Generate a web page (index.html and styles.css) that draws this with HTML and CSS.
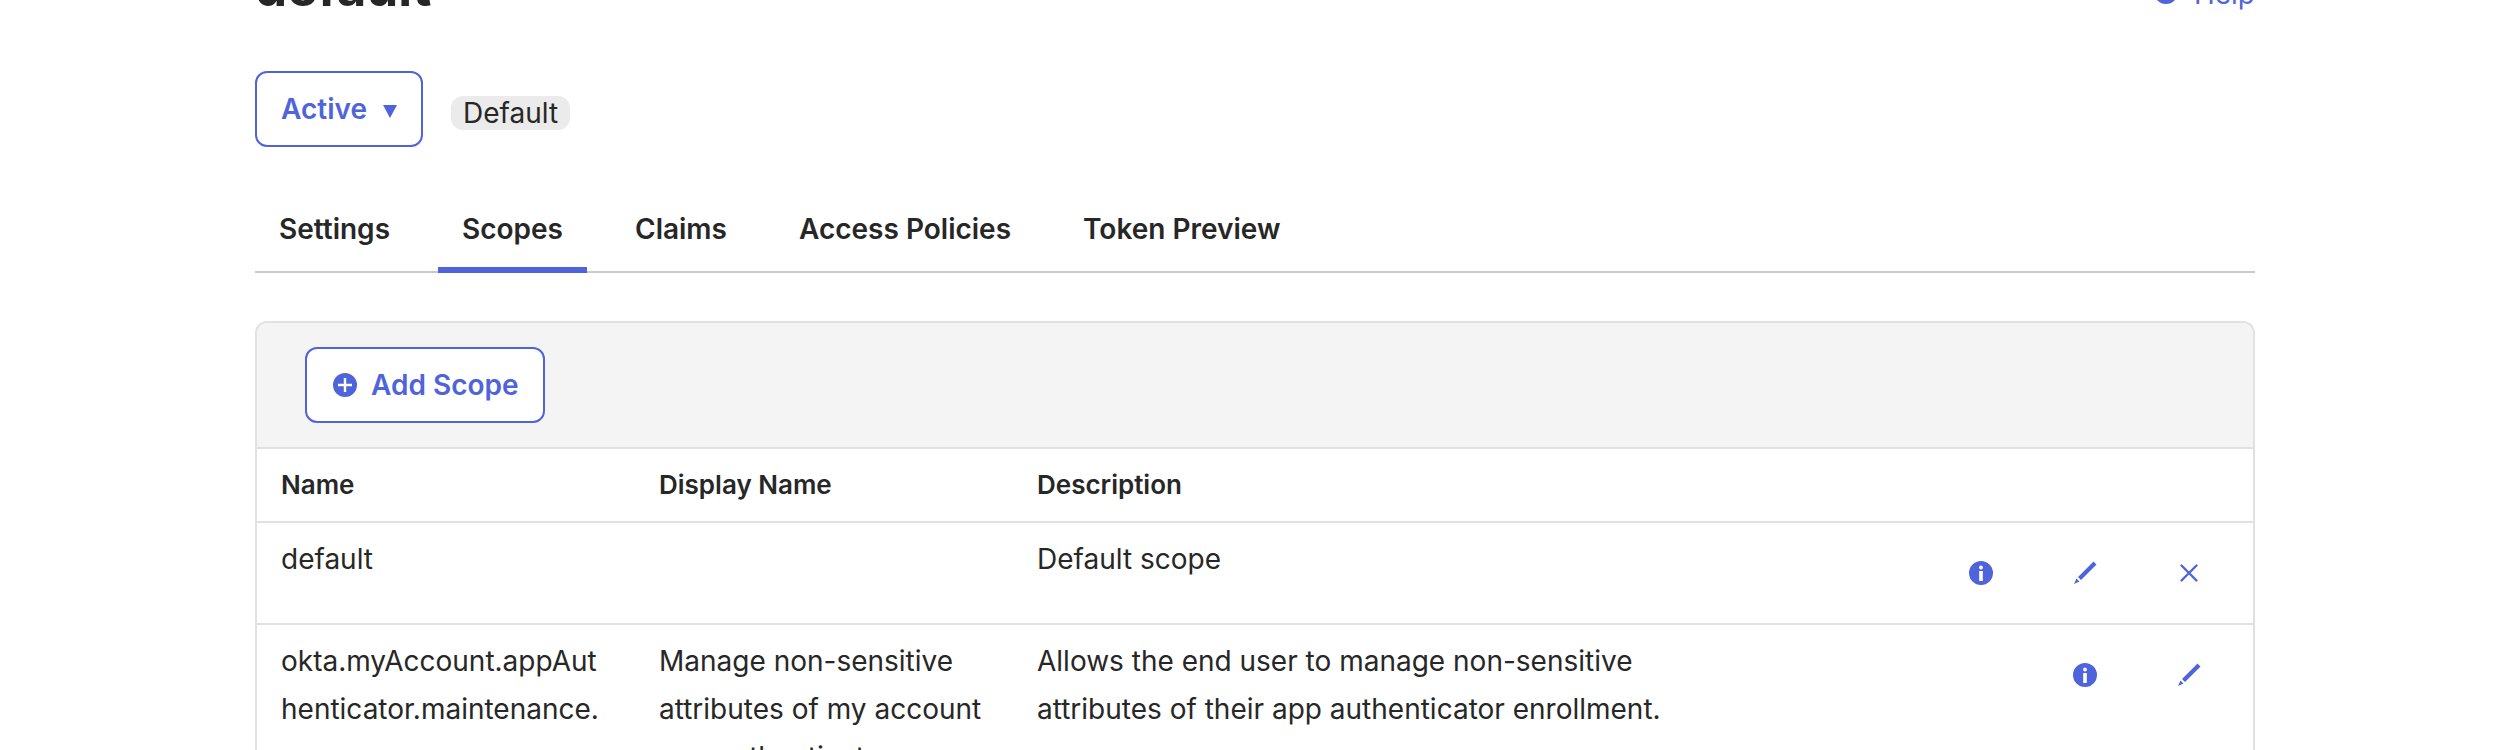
FILE: index.html
```html
<!DOCTYPE html>
<html lang="en">
<head>
    <meta charset="UTF-8">
    <meta name="viewport" content="width=device-width, initial-scale=1.0">
    <title>default - Authorization Server</title>
    <link rel="stylesheet" href="styles.css">
</head>
<body>

<!-- icons shared by the buttons below -->
<svg class="icon-defs" aria-hidden="true">
  <symbol id="icon-info" viewBox="0 0 24 24">
    <path fill-rule="evenodd" d="M12 0a12 12 0 1 1 0 24a12 12 0 0 1 0-24zM12 4.600a1.900 1.900 0 1 0 0 3.800a1.900 1.900 0 0 0 0-3.800zM10.200 10v10h3.600V10z"/>
  </symbol>
  <symbol id="icon-plus" viewBox="0 0 24 24">
    <path fill-rule="evenodd" d="M12 0a12 12 0 1 1 0 24a12 12 0 0 1 0-24zM10.800 5v5.800H5v2.400h5.800V19h2.400v-5.800H19v-2.400h-5.800V5z"/>
  </symbol>
  <symbol id="icon-pencil" viewBox="0 0 24 24">
    <path d="M20.500 0.500L23.500 3.500L8 19L5 16zM3.500 17.500L6.500 20.500L1 23z"/>
  </symbol>
  <symbol id="icon-close" viewBox="0 0 24 24">
    <path d="M4.500 4.500L19.500 19.500M19.500 4.500L4.500 19.500" fill="none" stroke="currentColor" stroke-width="2.400" stroke-linecap="round"/>
  </symbol>
</svg>

<main class="page">
  <header class="page-header">
    <h1>default</h1>
    <a class="help-link" href="#help">
      <svg class="icon"><use href="#icon-info"/></svg>
      Help
    </a>
  </header>

  <div class="status-bar">
    <button class="button status-button" type="button">Active <span class="caret"></span></button>
    <span class="label">Default</span>
  </div>

  <nav class="tabs">
    <a class="tab" href="#settings">Settings</a>
    <a class="tab active" href="#scopes">Scopes</a>
    <a class="tab" href="#claims">Claims</a>
    <a class="tab" href="#policies">Access Policies</a>
    <a class="tab" href="#preview">Token Preview</a>
  </nav>

  <section class="panel">
    <div class="panel-header">
      <button class="button add-button" type="button">
        <svg class="icon"><use href="#icon-plus"/></svg>
        Add Scope
      </button>
    </div>

    <table class="scopes">
      <thead>
        <tr>
          <th class="col-name">Name</th>
          <th class="col-display">Display Name</th>
          <th class="col-description">Description</th>
          <th class="col-actions"></th>
        </tr>
      </thead>
      <tbody>
        <tr>
          <td>default</td>
          <td></td>
          <td>Default scope</td>
          <td>
            <div class="actions">
              <button type="button" aria-label="Info"><svg class="icon"><use href="#icon-info"/></svg></button>
              <button type="button" aria-label="Edit"><svg class="icon"><use href="#icon-pencil"/></svg></button>
              <button type="button" aria-label="Delete"><svg class="icon"><use href="#icon-close"/></svg></button>
            </div>
          </td>
        </tr>
        <tr>
          <td>okta.myAccount.appAuthenticator.maintenance.manage</td>
          <td>Manage non-sensitive attributes of my account app authenticators</td>
          <td>Allows the end user to manage non-sensitive attributes of their app authenticator enrollment.</td>
          <td>
            <div class="actions">
              <button type="button" aria-label="Info"><svg class="icon"><use href="#icon-info"/></svg></button>
              <button type="button" aria-label="Edit"><svg class="icon"><use href="#icon-pencil"/></svg></button>
            </div>
          </td>
        </tr>
      </tbody>
    </table>
  </section>
</main>

</body>
</html>
```

FILE: styles.css
```css
* {
  box-sizing: border-box;
}

body {
  margin: 0;
  padding-left: 6px;
  background: #fff;
  color: #272727;
  font-family: Inter, "Liberation Sans", sans-serif;
  font-size: 28px;
  line-height: 48px;
}

a {
  color: #4f64db;
  text-decoration: none;
}

button {
  font: inherit;
  color: #4f64db;
  cursor: pointer;
}

.icon-defs {
  display: none;
}

.icon {
  width: 24px;
  height: 24px;
  fill: currentColor;
  flex: none;
}

.page {
  max-width: 2000px;
  margin: -42px auto 0;
}

/* heading */
.page-header {
  display: flex;
  justify-content: space-between;
  align-items: flex-end;
}

h1 {
  margin: 0;
  font-size: 51px;
  line-height: 60px;
  font-weight: 700;
}

.help-link {
  display: flex;
  align-items: center;
  gap: 16px;
}

.help-link .icon {
  margin-bottom: 4px;
}

/* status */
.status-bar {
  display: flex;
  align-items: center;
  gap: 28px;
  margin-top: 53px;
}

.button {
  display: flex;
  align-items: center;
  height: 76px;
  padding: 0 24px;
  border: 2px solid #4f64db;
  border-radius: 12px;
  background: #fff;
  font-weight: 600;
}

.status-button {
  gap: 16px;
}

.caret {
  margin-top: 4px;
  border: 7px solid transparent;
  border-top: 13px solid #4f64db;
  border-bottom: 0;
}

.label {
  margin-top: 8px;
  padding: 0 12px;
  border-radius: 12px;
  background: #ebebeb;
  line-height: 34px;
}

/* tabs */
.tabs {
  display: flex;
  gap: 24px;
  margin-top: 46px;
  box-shadow: inset 0 -2px #cacaca;
}

.tab {
  padding: 12px 24px 14px;
  border-bottom: 6px solid transparent;
  color: #272727;
  font-weight: 600;
}

.tab.active {
  border-color: #4f64db;
}

/* scopes panel */
.panel {
  margin-top: 48px;
  border: 2px solid #e1e1e1;
  border-radius: 12px;
  overflow: hidden;
}

.panel-header {
  padding: 24px 48px;
  background: #f4f4f4;
}

.add-button {
  gap: 14px;
  padding-left: 26px;
}

.scopes {
  width: 100%;
  table-layout: fixed;
  border-spacing: 0;
}

.scopes th,
.scopes td {
  padding: 12px 24px;
  border-top: 2px solid #e1e1e1;
  text-align: left;
  vertical-align: top;
  overflow-wrap: break-word;
}

.scopes th {
  font-size: 26px;
  font-weight: 600;
}

.col-name,
.col-display {
  width: 378px;
}

.col-actions {
  width: 24%;
}

.actions {
  display: flex;
  justify-content: flex-end;
  gap: 24px;
}

.actions button {
  display: flex;
  align-items: center;
  justify-content: center;
  width: 80px;
  height: 76px;
  padding: 0;
  border: 0;
  background: none;
}
```
